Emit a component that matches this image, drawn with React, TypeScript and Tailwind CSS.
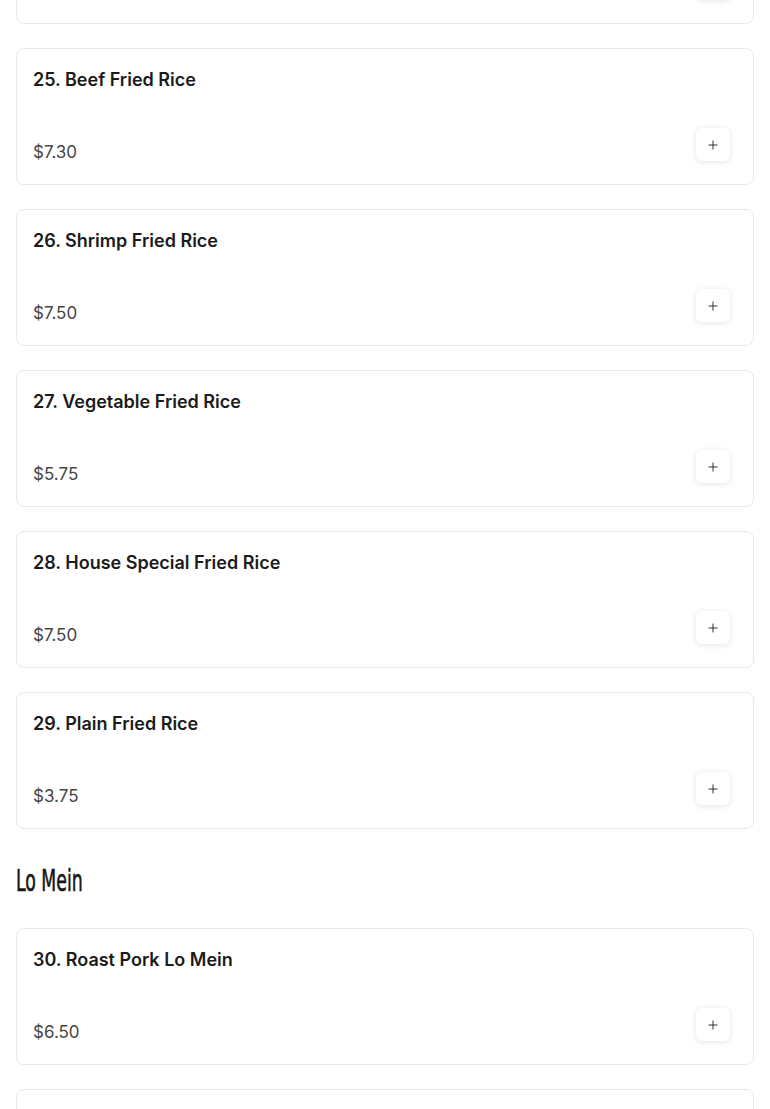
import { Plus } from 'lucide-react'

type Item = {
  name: string
  price: string
}

const friedRice: Item[] = [
  { name: '24. Chicken Fried Rice', price: '$7.30' },
  { name: '25. Beef Fried Rice', price: '$7.30' },
  { name: '26. Shrimp Fried Rice', price: '$7.50' },
  { name: '27. Vegetable Fried Rice', price: '$5.75' },
  { name: '28. House Special Fried Rice', price: '$7.50' },
  { name: '29. Plain Fried Rice', price: '$3.75' }
]

const loMein: Item[] = [
  { name: '30. Roast Pork Lo Mein', price: '$6.50' },
  { name: '31. Chicken Lo Mein', price: '$6.50' }
]

function MenuCard({ item }: { item: Item }) {
  return (
    <div className="flex h-[137px] flex-col rounded-lg border border-[#e9e9e9] bg-white p-4">
      <h3 className="mt-px text-lg leading-7 font-semibold text-[#1b1b1b]">
        {item.name}
      </h3>
      <div className="mt-auto flex items-end justify-between">
        <span className="mb-[4px] text-[17px] leading-6 text-[#454545]">
          {item.price}
        </span>
        <button
          type="button"
          className="mr-[7px] mb-[7px] flex h-[33px] w-[34px] items-center justify-center rounded-md bg-white shadow-[0_1px_6px_rgba(0,0,0,0.11)]"
        >
          <Plus size={14} strokeWidth={1.6} className="text-[#222]" />
        </button>
      </div>
    </div>
  )
}

export default function App() {
  return (
    <main
      className="min-h-screen overflow-hidden bg-white"
      style={{ fontFamily: 'Inter, "Open Sans", sans-serif' }}
    >
      <div className="mt-[-113px] flex flex-col gap-6 px-4">
        {friedRice.map(item => (
          <MenuCard key={item.name} item={item} />
        ))}

        {/* section heading */}
        <div className="flex h-[51px] items-center pt-1">
          <h2
            className="origin-left scale-x-[0.62] text-[31px] leading-none font-normal text-[#151515] [-webkit-text-stroke:0.6px_#151515]"
            style={{ fontFamily: '"Liberation Sans Narrow", "DejaVu Sans Condensed", sans-serif' }}
          >
            Lo Mein
          </h2>
        </div>

        {loMein.map(item => (
          <MenuCard key={item.name} item={item} />
        ))}
      </div>
    </main>
  )
}
